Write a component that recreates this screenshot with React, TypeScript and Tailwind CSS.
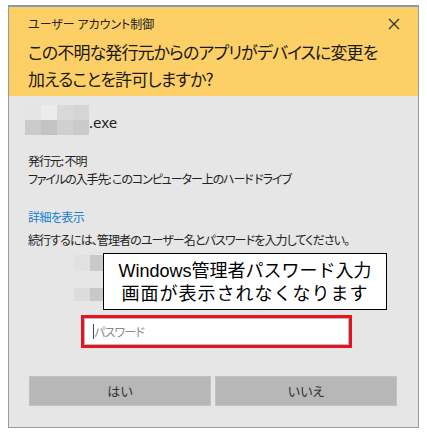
import React from "react";

const jp = { fontFamily: '"Noto Sans CJK JP", "Noto Sans", sans-serif' } as React.CSSProperties;

function Mosaic({ rows }: { rows: string[][] }) {
  return (
    <div className="flex flex-col">
      {rows.map((r, i) => (
        <div key={i} className="flex">
          {r.map((c, j) => (
            <div key={j} className="w-[16px] h-[15px]" style={{ background: c }} />
          ))}
        </div>
      ))}
    </div>
  );
}

export default function App() {
  return (
    <div className="w-[427px] h-[438px] bg-white pt-[5px] pl-[8px]" style={jp}>
      <div className="relative w-[411px] h-[423px] border border-[#9a9a9a] border-t-[#7f9cb2] border-t-2 bg-[#e6e6e6] flex flex-col [font-feature-settings:'palt']">
        {/* Header */}
        <div className="bg-[#fdcf67] h-[89px] pl-[19px] pr-[16px] flex flex-col">
          <div className="flex items-center justify-between h-[31px] pt-[2px]">
            <span className="text-[12px] text-[#222]">ユーザー アカウント制御</span>
            <svg width="12" height="12" viewBox="0 0 12 12" className="mr-[2px]">
              <path d="M1 1 L11 11 M11 1 L1 11" stroke="#333" strokeWidth="1.3" />
            </svg>
          </div>
          <div className="text-[17px] leading-[27px] tracking-[-0.9px] whitespace-nowrap text-[#1a1a1a]">
            <div>この不明な発行元からのアプリがデバイスに変更を</div>
            <div>加えることを許可しますか?</div>
          </div>
        </div>
        {/* Body */}
        <div className="flex flex-col pl-[19px] text-[#222]">
          <div className="flex items-end mt-[9px] ml-[-3px]">
            <Mosaic
              rows={[
                ["#e4e4e4", "#ececec", "#d9d9d9", "#d5d5d5"],
                ["#cbcbcb", "#c3c3c3", "#d0d0d0", "#cacaca"],
              ]}
            />
            <span className="text-[15px] leading-[20px] mb-[3px]" style={{ fontFamily: '"Noto Sans", sans-serif' }}>.exe</span>
          </div>
          <div className="mt-[17px] text-[12px] leading-[18px] tracking-[-1.1px] whitespace-nowrap">
            <div>発行元: 不明</div>
            <div>ファイルの入手先: このコンピューター上のハード ドライブ</div>
          </div>
          <div className="mt-[20px] text-[12px] leading-[18px] tracking-[-0.6px] text-[#1580d0]">詳細を表示</div>
          <div className="mt-[5px] text-[12px] leading-[18px] tracking-[-0.9px] whitespace-nowrap">続行するには、管理者のユーザー名とパスワードを入力してください。</div>
          <div className="ml-[46px] mt-[6px] flex flex-col gap-[17px]">
            <div className="flex h-[16px]">
              <div className="w-[16px] bg-[#e1e1e1]" />
              <div className="w-[30px] bg-[#c9c9c9]" />
              <div className="w-[80px] bg-[#dadada]" />
            </div>
            <div className="flex h-[13px]">
              <div className="w-[16px] bg-[#dcdcdc]" />
              <div className="w-[30px] bg-[#c8c8c8]" />
              <div className="w-[80px] bg-[#d8d8d8]" />
            </div>
          </div>
          <div className="ml-[53px] mt-[14px] w-[271px] h-[33px] border-[3px] border-[#e8141f] bg-white flex items-center">
            <div className="h-full w-full border border-[#b8b8c8] flex items-center pl-[8px]">
              <div className="w-px h-[15px] bg-[#444]" />
              <span className="text-[12px] tracking-[-0.8px] text-[#8a8a8a]">パスワード</span>
            </div>
          </div>
          <div className="flex gap-[4px] mt-[28px] ml-[1px]">
            <div className="w-[182px] h-[30px] bg-[#b7b7b7] border border-[#c2c2c2] flex items-center justify-center text-[13px] text-[#333]">はい</div>
            <div className="w-[182px] h-[30px] bg-[#b7b7b7] border border-[#c2c2c2] flex items-center justify-center text-[13px] text-[#333]">いいえ</div>
          </div>
        </div>
        {/* Overlay annotation */}
        <div className="absolute left-[94px] top-[246px] w-[284px] h-[57px] bg-white border-[1.5px] border-black flex flex-col items-center justify-center text-[18px] leading-[21px] text-black [font-feature-settings:normal]">
          <div style={{ fontFamily: '"Liberation Sans", "Noto Sans CJK JP", sans-serif' }}>Windows管理者パスワード入力</div>
          <div className="tracking-[1px]">画面が表示されなくなります</div>
        </div>
      </div>
    </div>
  );
}
